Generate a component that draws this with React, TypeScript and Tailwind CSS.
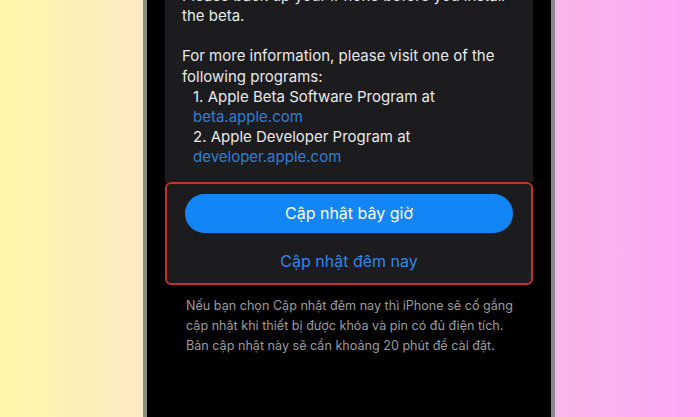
import React from 'react';

const font = { fontFamily: 'Inter, "Noto Sans", sans-serif' };

const footnote = [
  'Nếu bạn chọn Cập nhật đêm nay thì iPhone sẽ cố gắng',
  'cập nhật khi thiết bị được khóa và pin có đủ điện tích.',
  'Bản cập nhật này sẽ cần khoảng 20 phút để cài đặt.',
];

const App = () => {
  return (
    <div className="flex h-[417px] w-[700px] overflow-hidden" style={font}>
      <div className="w-[143px] bg-gradient-to-r from-[#fff6a9] to-[#fdeac2]" />
      <div className="w-[4px] bg-[#8d8a80]" />
      <div className="w-[18px] bg-black" />

      <div className="flex w-[368px] flex-col bg-black">
        <div className="bg-[#1c1c1e]">
          <div className="-mt-[14px] px-[17px] text-[15px] leading-[20.2px] text-[#e8e8ea]">
            <p>Please back up your iPhone before you install the beta.</p>
            <p className="mt-[20px]">For more information, please visit one of the following programs:</p>
            <ol className="pl-[11px]">
              <li>
                1. Apple Beta Software Program at
                <div className="text-[#2f7fd8]">beta.apple.com</div>
              </li>
              <li>
                2. Apple Developer Program at
                <div className="text-[#2f7fd8]">developer.apple.com</div>
              </li>
            </ol>
          </div>
        </div>
        <div className="h-[14px] bg-[#1c1c1e]" />
        <div className="rounded-[6px] border-2 border-[#c3312a] bg-[#1c1c1e] px-[18px] pt-[10px] pb-[11px]">
          <button className="flex h-[39px] w-full items-center justify-center rounded-full bg-[#1386f7] text-[16px] text-white">
            Cập nhật bây giờ
          </button>
          <div className="mt-[17px] flex h-[22px] items-center justify-center text-[16px] text-[#3385e6]">
            Cập nhật đêm nay
          </div>
        </div>
        <div className="mt-[11px] px-[21px] text-[12.6px] leading-[20px] text-[#9c9c9f]">
          {footnote.map((line) => (
            <div key={line} className="whitespace-nowrap">
              {line}
            </div>
          ))}
        </div>
      </div>

      <div className="w-[18px] bg-black" />
      <div className="w-[4px] bg-[#8b8590]" />
      <div className="flex-1 bg-gradient-to-r from-[#f9b7e8] to-[#fea6f8]" />
    </div>
  );
};

export default App;
